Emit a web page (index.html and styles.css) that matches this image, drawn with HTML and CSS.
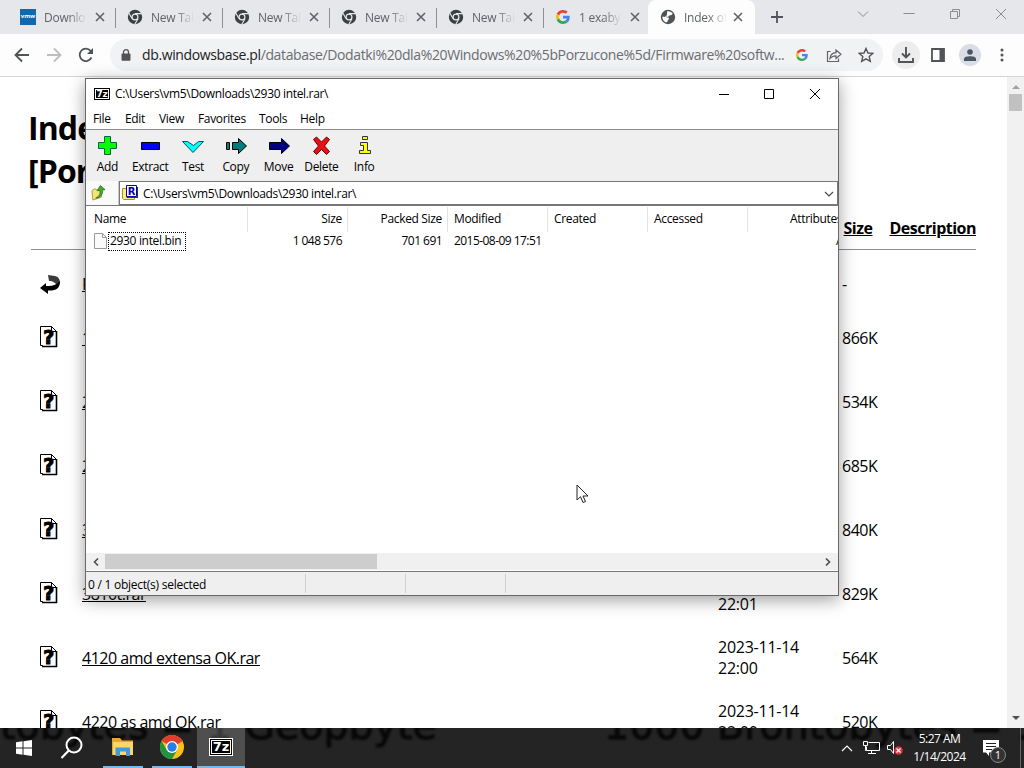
FILE: index.html
```html
<!DOCTYPE html>
<html lang="en">
<head>
  <meta charset="UTF-8">
  <meta name="viewport" content="width=device-width, initial-scale=1.0">
  <title>Index of</title>
  <link rel="stylesheet" href="styles.css">
</head>
<body>
  <!-- shared icons -->
  <svg class="defs">
    <symbol id="chrome-gray" viewBox="0 0 16 16">
      <circle cx="8" cy="8" r="7.2" fill="#3c4043"/>
      <circle cx="8" cy="8" r="3.5" fill="#e8eaed"/>
      <circle cx="8" cy="8" r="2.3" fill="#3c4043"/>
      <path d="M8 4.6h6.6M5 9.6L1.8 4M11 9.8L7.8 15.2" stroke="#e8eaed" stroke-width="1.1"/>
    </symbol>
    <symbol id="google" viewBox="0 0 48 48">
      <path fill="#ea4335" d="M24 9.5c3.5 0 6.700 1.200 9.200 3.600l6.900-6.900C35.900 2.400 30.500 0 24 0 14.600 0 6.500 5.400 2.600 13.200l8 6.200C12.400 13.700 17.700 9.500 24 9.500z"/>
      <path fill="#4285f4" d="M47 24.500c0-1.600-.2-3.100-.4-4.500H24v9h12.900c-.6 3-2.300 5.500-4.800 7.200l7.700 6C44.400 38 47 31.800 47 24.500z"/>
      <path fill="#fbbc05" d="M10.500 28.600c-.5-1.500-.8-3-.8-4.600s.3-3.100.8-4.600l-8-6.200C.9 16.500 0 20.100 0 24s.9 7.500 2.600 10.800z"/>
      <path fill="#34a853" d="M24 48c6.500 0 11.900-2.100 15.900-5.800l-7.700-6c-2.200 1.500-4.900 2.300-8.200 2.300-6.300 0-11.600-4.200-13.500-9.900l-8 6.200C6.500 42.600 14.600 48 24 48z"/>
    </symbol>
    <symbol id="close" viewBox="0 0 10 10">
      <path d="M1 1l8 8M9 1L1 9" stroke="#5f6368" stroke-width="1.600"/>
    </symbol>
    <symbol id="unknown" viewBox="0 0 20 22">
      <path d="M1.500.5h11l5 5v15H3.500v-1h-2z" fill="#fff" stroke="#000"/>
      <path d="M3 20.500h15M17.500 5v16" stroke="#000" stroke-width="1.600"/>
      <path d="M12.500.5v5h5" fill="none" stroke="#000"/>
      <text x="9.500" y="17.500" text-anchor="middle" class="qmark">?</text>
    </symbol>
  </svg>

  <div class="tabs">
    <div class="tab"><span class="vmw">vmw</span><span class="title">Downlo</span><svg class="x"><use href="#close"/></svg></div>
    <div class="tab"><svg class="fav"><use href="#chrome-gray"/></svg><span class="title">New Tab</span><svg class="x"><use href="#close"/></svg></div>
    <div class="tab"><svg class="fav"><use href="#chrome-gray"/></svg><span class="title">New Tab</span><svg class="x"><use href="#close"/></svg></div>
    <div class="tab"><svg class="fav"><use href="#chrome-gray"/></svg><span class="title">New Tab</span><svg class="x"><use href="#close"/></svg></div>
    <div class="tab"><svg class="fav"><use href="#chrome-gray"/></svg><span class="title">New Tab</span><svg class="x"><use href="#close"/></svg></div>
    <div class="tab last"><svg class="fav google"><use href="#google"/></svg><span class="title">1 exaby</span><svg class="x"><use href="#close"/></svg></div>
    <div class="tab active">
      <svg class="fav" viewBox="0 0 16 16"><circle cx="8" cy="8" r="7.200" fill="#505357"/><path d="M7 2.500c2-.8 4.500.2 5.800 2.200-1 .8-1.200 1.500-2.800 1.500-1 0-.8 1.600-2.200 1.600H5.500c1.500.8 3.500.3 3.500 1.800 0 1.200-1.500 1.200-1.800 3.700C4 13.500 2.200 10.500 2.500 7.500L5 8c.5-1.500 2-1.200 2-2.500z" fill="#fff"/></svg>
      <span class="title">Index of</span><svg class="x"><use href="#close"/></svg>
    </div>
    <svg class="plus" viewBox="0 0 12 12"><path d="M6 0v12M0 6h12" stroke="#505357" stroke-width="1.800"/></svg>
    <div class="caption">
      <svg viewBox="0 0 12 12"><path d="M1 3.500l5 5 5-5" fill="none" stroke="#8b8d90"/></svg>
      <svg viewBox="0 0 12 12"><path d="M.5 5.500h11" stroke="#8b8d90"/></svg>
      <svg viewBox="0 0 12 12"><path d="M1.500 3.500h7v7h-7zM3.500 3.500v-2h7v7h-2" fill="none" stroke="#8b8d90"/></svg>
      <svg viewBox="0 0 12 12"><path d="M1 1l10 10M11 1L1 11" stroke="#8b8d90"/></svg>
    </div>
  </div>

  <div class="toolbar">
    <svg class="nav" viewBox="0 0 16 16"><path d="M15 8H2M8 1.500L1.500 8 8 14.500" fill="none" stroke="#505357" stroke-width="1.800"/></svg>
    <svg class="nav" viewBox="0 0 16 16"><path d="M1 8h13M8 1.500L14.500 8 8 14.500" fill="none" stroke="#bcbec1" stroke-width="1.800"/></svg>
    <svg class="nav" viewBox="0 0 16 16"><path d="M13.500 10.500A6.200 6.200 0 1 1 12.600 3.800L14 5.500" fill="none" stroke="#505357" stroke-width="1.800"/><path d="M15 1v6H9z" fill="#505357"/></svg>
    <div class="omnibox">
      <svg class="lock" viewBox="0 0 10 12"><path d="M2.500 5V3.200a2.500 2.500 0 0 1 5 0V5" fill="none" stroke="#505357" stroke-width="1.300"/><rect x=".5" y="4.500" width="9" height="7.200" rx="1" fill="#505357"/></svg>
      <span class="url"><b>db.windowsbase.pl</b>/database/Dodatki%20dla%20Windows%20%5bPorzucone%5d/Firmware%20softw...</span>
      <svg class="g"><use href="#google"/></svg>
      <svg class="share" viewBox="0 0 16 16"><path d="M4.500 4.500h-3v10h11v-3" fill="none" stroke="#606367" stroke-width="1.200"/><path d="M4 11.500c.3-3.500 2-5.500 6-5.800V3l5 4.300-5 4.200V8.800c-3 0-4.500.8-6 2.700z" fill="none" stroke="#606367" stroke-width="1.200"/></svg>
      <svg class="star" viewBox="0 0 16 16"><path d="M8 1.500l2 4.500 4.800.4-3.600 3.200 1.100 4.800L8 11.900l-4.300 2.500 1.100-4.800L1.200 6.400 6 6z" fill="none" stroke="#505357" stroke-width="1.400"/></svg>
    </div>
    <div class="round dl"><svg viewBox="0 0 16 16"><path d="M8 0v10M4 6.500l4 4 4-4M1 11v4h14v-4" fill="none" stroke="#505357" stroke-width="1.900"/></svg></div>
    <svg class="side" viewBox="0 0 14 14"><path d="M1 1h12v12H1z" fill="none" stroke="#505357" stroke-width="1.800"/><path d="M8.500 1H13v12H8.500z" fill="#505357"/></svg>
    <div class="round user"><svg viewBox="0 0 12 12"><circle cx="6" cy="3" r="2.800" fill="#4b5563"/><path d="M0 12V9.800C0 6.500 12 6.500 12 9.800V12z" fill="#4b5563"/></svg></div>
    <svg class="dots" viewBox="0 0 4 14"><circle cx="2" cy="2" r="1.500"/><circle cx="2" cy="7" r="1.500"/><circle cx="2" cy="12" r="1.500"/></svg>
  </div>

  <div class="page">
    <div class="index">
      <h1>Index of /database/Dodatki dla Windows<br>[Porzucone]/Firmware</h1>
      <div class="row head"><span class="ico"></span><a class="name">Name</a><a class="date">Last modified</a><a class="size">Size</a><a class="desc">Description</a></div>
      <hr>
      <div class="row parent">
        <span class="ico"><svg class="back" viewBox="0 0 20 20"><path d="M8 1l7 1c4 1 5 4 5 7l-3 3c-1-3-4-5-8-5z" fill="#3a3a3a"/><path d="M20 7c.3 8-5 10-12 9.500V20L0 14l6-5v3c6 .5 11-1 14-5z"/></svg></span>
        <a class="name">Parent Directory</a><span class="date"></span><span class="size">-</span>
      </div>
      <div class="row"><span class="ico"><svg><use href="#unknown"/></svg></span><a class="name">1410.rar</a><span class="date">2023-11-14 22:01</span><span class="size">866K</span></div>
      <div class="row"><span class="ico"><svg><use href="#unknown"/></svg></span><a class="name">2920.rar</a><span class="date">2023-11-14 22:01</span><span class="size">534K</span></div>
      <div class="row"><span class="ico"><svg><use href="#unknown"/></svg></span><a class="name">2930 intel.rar</a><span class="date">2023-11-14 22:01</span><span class="size">685K</span></div>
      <div class="row"><span class="ico"><svg><use href="#unknown"/></svg></span><a class="name">3810.rar</a><span class="date">2023-11-14 22:01</span><span class="size">840K</span></div>
      <div class="row"><span class="ico"><svg><use href="#unknown"/></svg></span><a class="name">3810t.rar</a><span class="date">2023-11-14 22:01</span><span class="size">829K</span></div>
      <div class="row"><span class="ico"><svg><use href="#unknown"/></svg></span><a class="name">4120 amd extensa OK.rar</a><span class="date">2023-11-14 22:00</span><span class="size">564K</span></div>
      <div class="row"><span class="ico"><svg><use href="#unknown"/></svg></span><a class="name">4220 as amd OK.rar</a><span class="date">2023-11-14 22:00</span><span class="size">520K</span></div>
    </div>
    <div class="vscroll">
      <svg viewBox="0 0 8 5"><path d="M0 5l4-4 4 4z" fill="#a3a3a3"/></svg>
      <div class="thumb"></div>
      <svg viewBox="0 0 8 5"><path d="M0 0l4 4 4-4z" fill="#505050"/></svg>
    </div>
  </div>

  <!-- 7-Zip -->
  <div class="window">
    <div class="titlebar">
      <span class="sevenz">7z</span><span class="caption-text">C:\Users\vm5\Downloads\2930 intel.rar\</span>
      <div class="buttons">
        <svg viewBox="0 0 12 12"><path d="M1 6.500h10" stroke="#000"/></svg>
        <svg viewBox="0 0 12 12"><path d="M1.500 1.500h9v9h-9z" fill="none" stroke="#000"/></svg>
        <svg viewBox="0 0 12 12"><path d="M1 1l10 10M11 1L1 11" stroke="#000"/></svg>
      </div>
    </div>
    <div class="menu"><span class="m1">File</span><span class="m2">Edit</span><span class="m3">View</span><span class="m4">Favorites</span><span class="m5">Tools</span><span>Help</span></div>
    <div class="actions">
      <div class="action"><svg viewBox="0 0 24 20"><path d="M9.500.5h6v6h6v6h-6v6h-6v-6h-6v-6h6z" fill="#0f0" stroke="#064"/></svg>Add</div>
      <div class="action"><svg viewBox="0 0 24 20"><path d="M3.500 6.500h18v7h-18z" fill="#00f" stroke="#000"/></svg>Extract</div>
      <div class="action"><svg viewBox="0 0 24 20"><path d="M1.500 5.500h5l6 4 5-4h5l-10.500 11z" fill="#0ff" stroke="#055"/></svg>Test</div>
      <div class="action"><svg viewBox="0 0 24 20"><path d="M2.500 6.500h3v7h-3zM8.500 6.500h6v-4l8 7.500-8 7.500v-4h-6z" fill="#007c7c" stroke="#000"/></svg>Copy</div>
      <div class="action"><svg viewBox="0 0 24 20"><path d="M2.500 6.500h12v-4l8 7.500-8 7.500v-4h-12z" fill="#000080" stroke="#000"/></svg>Move</div>
      <div class="action"><svg viewBox="0 0 24 20"><path d="M4.500 3.500l3-2.500 5 5 5-5 3 2.500-5 6.500 5 5.500-3 3-5-5-5 5-3-3 5-5.500z" fill="#e81010" stroke="#600"/></svg>Delete</div>
      <div class="action"><svg viewBox="0 0 24 20"><path d="M10.500.5h5v3h-5zM8.500 6.500h7v8h3v3h-11v-3h4v-5h-3z" fill="#ff0" stroke="#333"/></svg>Info</div>
    </div>
    <div class="address">
      <div class="up"><svg viewBox="0 0 16 18"><path d="M1 7l3-2 2 1h5v8l-9 3z" fill="#f5e27a" stroke="#b59a30"/><path d="M5 15c4-2 5-5 4.500-8H6.500L10 1.500 15 6h-2.500C13 11 10 15 5 15z" fill="#3fae2a" stroke="#2b6b1c" stroke-width=".8"/></svg></div>
      <div class="combo">
        <svg class="folder" viewBox="0 0 18 16"><path d="M1.500 3.500h4v9h8v2h-11l-1-1z" fill="#ffec80" stroke="#a89030"/><path d="M5.500.5h10v11h-10z" fill="#fff" stroke="#0000b0"/><path d="M6 12.500h11M16.500 2v11" stroke="#334"/><text x="10.500" y="9.500" text-anchor="middle" class="rletter">R</text></svg>
        <span>C:\Users\vm5\Downloads\2930 intel.rar\</span>
        <svg class="drop" viewBox="0 0 10 6"><path d="M1 1l4 4 4-4" fill="none" stroke="#444" stroke-width="1.100"/></svg>
      </div>
    </div>
    <div class="list">
      <div class="cols"><span class="c1">Name</span><span class="r">Size</span><span class="r">Packed Size</span><span>Modified</span><span>Created</span><span>Accessed</span><span class="attr">Attributes</span></div>
      <div class="cols file">
        <span class="c1"><svg viewBox="0 0 13 16"><path d="M.5.5h8l4 4v11H.5z" fill="#fbfbfb" stroke="#999"/><path d="M8.500.5v4h4" fill="none" stroke="#999"/></svg><i>2930 intel.bin</i></span>
        <span class="r">1 048 576</span><span class="r">701 691</span><span>2015-08-09 17:51</span><span></span><span></span><span class="attr a">A</span>
      </div>
    </div>
    <div class="hscroll">
      <svg viewBox="0 0 6 8"><path d="M5 0.500L1.500 4 5 7.500" fill="none" stroke="#505050" stroke-width="1.600"/></svg>
      <div class="track"><div class="bar"></div></div>
      <svg viewBox="0 0 6 8"><path d="M1 .5L4.500 4 1 7.500" fill="none" stroke="#505050" stroke-width="1.600"/></svg>
    </div>
    <div class="status"><span class="s1">0 / 1 object(s) selected</span><span></span><span></span></div>
  </div>

  <svg class="cursor" viewBox="0 0 13 20"><path d="M1 1v15l3.500-3.300L7 18.500l2.500-1L7 12h5z" fill="#fff" stroke="#222"/></svg>

  <div class="taskbar">
    <div class="wall"><span>tobytes = 1 Geopbyte</span><span class="w2">1000 Brontobytes = 1</span></div>
    <div class="item start"><svg width="16" height="16" viewBox="0 0 16 16"><path d="M0 2.200L6.500 1.300V7.500H0zM7.500 1.200L16 0v7.500H7.500zM0 8.500h6.500v6.200L0 13.800zM7.500 8.500H16V16l-8.500-1.200z" fill="#fff"/></svg></div>
    <div class="item"><svg width="24" height="24" viewBox="0 0 24 24"><circle cx="14" cy="9" r="7.500" fill="none" stroke="#fff" stroke-width="2"/><path d="M8.800 14.500L1.500 22" stroke="#fff" stroke-width="2.200"/></svg></div>
    <div class="item open explorer"><svg width="22" height="20" viewBox="0 0 22 20"><path d="M0 1h8l2 2.500h11V18H0z" fill="#e8a823"/><path d="M1 5h20v13H1z" fill="#ffd666"/><path d="M3.500 10.500h14.500V19h-4v-4.500h-6V19H3.500z" fill="#3f9bdc"/></svg></div>
    <div class="item open"><svg width="24" height="24" viewBox="0 0 24 24"><circle cx="12" cy="12" r="12" fill="#fbc116"/><path d="M12 12L1.600 6A12 12 0 0 1 22.400 6z" fill="#e33b2e"/><path d="M12 6h10.400L12 12z" fill="#e33b2e"/><path d="M1.600 6A12 12 0 0 0 12 24l5.200-9L12 12l-5.200 3z" fill="#229342"/><circle cx="12" cy="12" r="6" fill="#fff"/><circle cx="12" cy="12" r="4.700" fill="#2a7de1"/></svg></div>
    <div class="item current"><span class="sevenz big">7z</span></div>
    <div class="tray">
      <svg width="12" height="8" viewBox="0 0 12 8"><path d="M1 7l5-5 5 5" fill="none" stroke="#fff" stroke-width="1.200"/></svg>
      <svg class="net" width="17" height="14" viewBox="0 0 17 14"><path d="M5.500 1.500h11v8H3.500V5.500M8.500 9.500v3M5 12.500h8M.5.500h4v4h-4zM2.500 4.500v5h1" fill="none" stroke="#fff"/></svg>
      <svg class="vol" width="17" height="16" viewBox="0 0 17 16"><path d="M.5 5.500h3l3-4v12l-3-4h-3z" fill="none" stroke="#fff"/><circle cx="11.500" cy="10.500" r="4.300" fill="#d9343e"/><path d="M9.500 8.500l4 4M13.500 8.500l-4 4" stroke="#fff" stroke-width="1.200"/></svg>
      <div class="clock">5:27 AM<br>1/14/2024</div>
      <div class="note"><svg width="16" height="16" viewBox="0 0 16 16"><path d="M0 0h16v12.500H6V16l-3-3.500H0z" fill="#fff"/><path d="M3 3.500h10M3 6.500h10M3 9.500h6" stroke="#222"/></svg><span class="badge">1</span></div>
      <div class="peek"></div>
    </div>
  </div>
</body>
</html>
```

FILE: styles.css
```css
* {
  margin: 0;
  padding: 0;
  box-sizing: border-box;
}
body {
  width: 1024px;
  height: 768px;
  overflow: hidden;
  position: relative;
  display: flex;
  flex-direction: column;
  background-color: #fff;
  font-family: "Open Sans", "Noto Sans", sans-serif;
  font-size: 12px;
  color: #000;
}
svg {
  display: block;
  flex: none;
}
.defs {
  position: absolute;
  width: 0;
  height: 0;
}

/* tab strip */
.tabs {
  height: 34px;
  flex: none;
  display: flex;
  align-items: center;
  padding-left: 10px;
  background-color: #e6e7eb;
}
.tab {
  width: 107px;
  height: 34px;
  flex: none;
  display: flex;
  align-items: center;
  padding: 0 12px 0 10px;
  background: linear-gradient(#8d8f93, #8d8f93) right 1px top 8px / 1px 20px no-repeat;
}
.tab.last {
  width: 103px;
  padding-right: 8px;
  background: none;
}
.tab.active {
  width: 107px;
  background: #fdfdfd;
  border-radius: 8px 8px 0 0;
  padding-left: 12px;
}
.tab .title {
  width: 43px;
  margin-left: 8px;
  overflow: hidden;
  white-space: nowrap;
  letter-spacing: -0.25px;
  color: #606367;
  -webkit-mask-image: linear-gradient(90deg, #000 55%, transparent);
  mask-image: linear-gradient(90deg, #000 55%, transparent);
}
.fav {
  width: 16px;
  height: 16px;
}
.fav.google {
  padding: 1px;
}
.vmw {
  width: 16px;
  height: 16px;
  line-height: 15px;
  flex: none;
  text-align: center;
  font-size: 6px;
  font-weight: bold;
  color: #fff;
  background-color: #1068ad;
}
.x {
  width: 10px;
  height: 10px;
  margin-left: auto;
}
.plus {
  width: 12px;
  height: 12px;
  margin-left: 16px;
}
.caption {
  display: flex;
  gap: 34px;
  margin-left: auto;
  margin-right: 17px;
  padding-bottom: 6px;
}
.caption svg {
  width: 12px;
  height: 12px;
}

/* toolbar */
.toolbar {
  height: 43px;
  flex: none;
  display: flex;
  align-items: center;
  padding: 0 0 1px 14px;
  background-color: #fdfdfd;
  border-bottom: 1px solid #d5d5d5;
}
.nav {
  width: 16px;
  height: 16px;
  margin-right: 16px;
}
.omnibox {
  width: 773px;
  height: 32px;
  display: flex;
  align-items: center;
  border-radius: 16px;
  background-color: #f1f2f4;
  padding-left: 11px;
}
.lock {
  width: 10px;
  height: 12px;
}
.url {
  width: 640px;
  margin-left: 11px;
  font-size: 14px;
  letter-spacing: -0.37px;
  white-space: nowrap;
  color: #6a6d71;
}
.url b {
  font-weight: normal;
  color: #202124;
}
.g {
  width: 12px;
  height: 12px;
  margin-left: 14px;
}
.share {
  width: 16px;
  height: 16px;
  margin-left: 18px;
}
.star {
  width: 16px;
  height: 16px;
  margin-left: 16px;
}
.round {
  border-radius: 50%;
  display: flex;
  align-items: center;
  justify-content: center;
  flex: none;
}
.dl {
  width: 28px;
  height: 28px;
  margin-left: 9px;
  background-color: #ededed;
}
.dl svg {
  width: 16px;
  height: 16px;
}
.side {
  width: 14px;
  height: 14px;
  margin-left: 11px;
}
.user {
  width: 22px;
  height: 22px;
  margin-left: 14px;
  background-color: #d8dde6;
}
.user svg {
  width: 12px;
  height: 12px;
}
.dots {
  width: 4px;
  height: 14px;
  margin-left: 19px;
  fill: #505357;
}

/* directory listing */
.page {
  height: 651px;
  flex: none;
  display: flex;
  overflow: hidden;
}
.index {
  width: 1007px;
  padding: 29px 31px 0 28px;
  font-size: 16px;
}
h1 {
  font-size: 32px;
  line-height: 43px;
  letter-spacing: -0.9px;
  white-space: nowrap;
}
.row {
  display: flex;
  align-items: center;
  height: 64px;
  line-height: 21px;
  letter-spacing: -0.5px;
}
.row a {
  text-decoration: underline;
}
.row .ico {
  width: 54px;
  padding: 0 0 2px 11px;
}
.row .ico svg {
  width: 20px;
  height: 22px;
}
.row .ico .back {
  width: 22px;
  height: 20px;
}
.row .name {
  width: 636px;
}
.row .date {
  width: 90px;
  margin-right: 34px;
  letter-spacing: -0.25px;
}
.head {
  height: 57px;
  padding-top: 15px;
  font-weight: bold;
  white-space: nowrap;
}
.head .name {
  padding-left: 6px;
}
.head .size {
  width: 48px;
  padding-left: 2px;
}
hr {
  height: 1px;
  border: none;
  background-color: #8f8f8f;
  width: 945px;
  margin-left: 3px;
}
.parent {
  height: 56px;
  padding-top: 13px;
}
.qmark {
  font: bold 19px "DejaVu Sans", sans-serif;
  stroke: #000;
  stroke-width: 1px;
}
.vscroll {
  width: 17px;
  display: flex;
  flex-direction: column;
  align-items: center;
  padding: 7px 0;
  background-color: #f1f1f1;
}
.vscroll svg {
  width: 8px;
  height: 5px;
}
.thumb {
  width: 13px;
  height: 17px;
  margin: 5px 0 auto;
  background-color: #c1c1c1;
}

/* 7-Zip window */
.window {
  position: absolute;
  left: 85px;
  top: 78px;
  width: 754px;
  height: 518px;
  display: flex;
  flex-direction: column;
  border: 1px solid #686868;
  background-color: #fff;
  box-shadow: 0 4px 16px rgba(0, 0, 0, 0.38);
  letter-spacing: -0.33px;
  line-height: 16px;
}
.titlebar {
  height: 29px;
  flex: none;
  display: flex;
  align-items: center;
  padding-left: 8px;
}
.sevenz {
  width: 16px;
  height: 12px;
  border: 1px solid #000;
  box-shadow: inset 0 0 0 1px #fff;
  background-color: #000;
  color: #fff;
  font: bold 9px/10px "DejaVu Sans", sans-serif;
  text-align: center;
}
.caption-text {
  margin-left: 5px;
}
.buttons {
  display: flex;
  gap: 33px;
  margin-left: auto;
  margin-right: 17px;
}
.buttons svg {
  width: 12px;
  height: 12px;
}
.buttons svg:last-child {
  margin-left: 1px;
}
.menu {
  height: 22px;
  flex: none;
  display: flex;
  align-items: center;
  padding-left: 7px;
  border-bottom: 1px solid #8d8d8d;
}
.m1 {
  width: 32px;
}
.m2 {
  width: 34px;
}
.m3 {
  width: 39px;
}
.m4 {
  width: 61px;
}
.m5 {
  width: 41px;
}
.actions {
  height: 51px;
  flex: none;
  display: flex;
  background-color: #efefef;
}
.action {
  width: 42.8px;
  display: flex;
  flex-direction: column;
  align-items: center;
  padding-top: 6px;
}
.action svg {
  width: 24px;
  height: 20px;
  margin-bottom: 3px;
}
.address {
  height: 25px;
  flex: none;
  display: flex;
  border-bottom: 1px solid #777;
}
.up {
  width: 33px;
  padding: 3px 0 0 5px;
  border-right: 1px solid #c8c8c8;
  background-color: #fafafa;
}
.up svg {
  width: 15px;
  height: 17px;
}
.combo {
  flex: 1;
  display: flex;
  align-items: center;
  border: 1px solid #777;
  padding: 1px 3px 0 1px;
}
.folder {
  width: 18px;
  height: 16px;
  margin: -2px 4px 0 0;
}
.rletter {
  font: bold 10px "DejaVu Sans", sans-serif;
  fill: #0000b0;
}
.drop {
  width: 10px;
  height: 6px;
  margin-left: auto;
}
.list {
  height: 347px;
  flex: none;
  padding-top: 1px;
}
.cols {
  display: flex;
  height: 25px;
  overflow: hidden;
  white-space: nowrap;
}
.cols span {
  width: 100px;
  flex: none;
  padding: 4px 5px 0 6px;
  border-right: 1px solid #e3e3e3;
}
.cols .c1 {
  width: 162px;
  padding-left: 8px;
}
.cols .r {
  text-align: right;
}
.cols .attr {
  width: 106px;
  padding-left: 42px;
  border: none;
}
.file {
  height: 20px;
  letter-spacing: -0.55px;
}
.file span {
  padding-top: 1px;
  border-color: transparent;
}
.file .c1 {
  display: flex;
  letter-spacing: -0.33px;
}
.file svg {
  width: 13px;
  height: 16px;
}
.file i {
  height: 19px;
  margin: -1px 0 0 1px;
  padding: 0 4px 0 1px;
  border: 1px dotted #000;
  font-style: normal;
}
.cols.file .a {
  width: 104px;
  padding: 1px 0 0 88px;
  overflow: hidden;
}
.hscroll {
  height: 17px;
  flex: none;
  display: flex;
  align-items: center;
  padding: 0 7px;
  background-color: #f0f0f0;
}
.hscroll svg {
  width: 6px;
  height: 8px;
}
.track {
  flex: 1;
  height: 15px;
  padding-left: 6px;
}
.bar {
  width: 272px;
  height: 15px;
  background-color: #cdcdcd;
}
.status {
  flex: 1;
  display: flex;
  margin-top: 1px;
  border-top: 1px solid #777;
  background-color: #efefef;
  padding: 2px 0 2px 2px;
  letter-spacing: -0.25px;
}
.status span {
  width: 100px;
  padding-top: 3px;
  border-right: 1px solid #d0d0d0;
}
.status .s1 {
  width: 218px;
}
.cursor {
  position: absolute;
  left: 576px;
  top: 484px;
  width: 13px;
  height: 20px;
}

/* taskbar */
.taskbar {
  height: 40px;
  flex: none;
  position: relative;
  display: flex;
  background-color: #242424;
  overflow: hidden;
}
/* wallpaper showing through */
.wall {
  position: absolute;
  left: 0;
  top: -26px;
  width: 1024px;
  display: flex;
  white-space: nowrap;
  font: 39.500px/46px "DejaVu Sans", sans-serif;
  color: #080808;
  -webkit-text-stroke: 1px #080808;
  filter: blur(1px);
}
.wall span {
  width: 604px;
  flex: none;
}
.item {
  position: relative;
  width: 48px;
  flex: none;
  display: flex;
  align-items: center;
  justify-content: center;
}
.item.open {
  width: 40px;
  margin-right: 5px;
  margin-left: 4px;
  border-bottom: 2px solid #76b9ed;
}
.item.explorer {
  margin-left: 7px;
}
.item.current {
  background-color: rgba(255, 255, 255, 0.2);
  border-bottom: 2px solid #76b9ed;
}
.sevenz.big {
  width: 24px;
  height: 18px;
  border: 1px solid #fff;
  box-shadow: inset 0 0 0 1px #000, inset 0 0 0 2px #fff;
  font-size: 13px;
  line-height: 15px;
}
.tray {
  position: relative;
  display: flex;
  align-items: center;
  margin-left: auto;
  color: #fff;
}
.net {
  margin-left: 10px;
}
.vol {
  margin-left: 7px;
}
.clock {
  width: 71px;
  text-align: center;
  line-height: 18px;
  letter-spacing: -0.5px;
}
.note {
  position: relative;
  width: 45px;
  padding-left: 8px;
}
.badge {
  position: absolute;
  left: 15px;
  top: 7px;
  width: 16px;
  height: 16px;
  border-radius: 50%;
  border: 1px solid #888;
  background-color: #333;
  font-size: 11px;
  line-height: 14px;
  text-align: center;
}
.peek {
  width: 4px;
  height: 40px;
  border-left: 1px solid #666;
}
```
